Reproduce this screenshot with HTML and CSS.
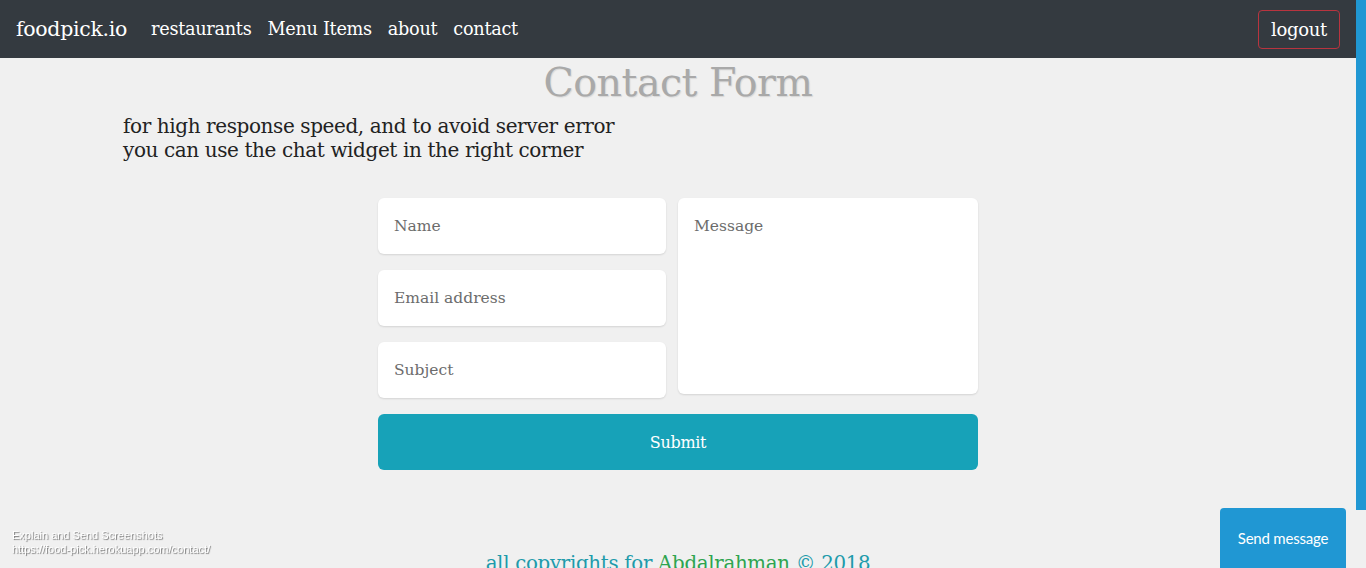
FILE: index.html
```html
<!DOCTYPE html>
<html lang="en">
<head>
<meta charset="utf-8">
<title>foodpick.io - contact</title>
<link rel="stylesheet" href="styles.css">
</head>
<body>
<div class="page">
  <nav class="navbar">
    <a class="brand" href="#">foodpick.io</a>
    <ul class="nav-links">
      <li><a href="#">restaurants</a></li>
      <li><a href="#">Menu Items</a></li>
      <li><a href="#">about</a></li>
      <li><a href="#">contact</a></li>
    </ul>
    <button class="logout">logout</button>
  </nav>
  <main class="content">
    <h1 class="title">Contact Form</h1>
    <p class="note">for high response speed, and to avoid server error<br>you can use the chat widget in the right corner</p>
    <form class="form">
      <div class="col-left">
        <input class="field" type="text" placeholder="Name">
        <input class="field" type="email" placeholder="Email address">
        <input class="field" type="text" placeholder="Subject">
      </div>
      <textarea class="field message" placeholder="Message"></textarea>
      <button class="submit" type="button">Submit</button>
    </form>
    <footer class="footer">all copyrights for <span class="author">Abdalrahman</span> © 2018</footer>
  </main>
</div>
<div class="shot-note">Explain and Send Screenshots<br>https://food-pick.herokuapp.com/contact/</div>
<div class="chat-strip"></div>
<button class="chat-btn">Send message</button>
</body>
</html>
```
FILE: styles.css
```css
* { box-sizing: border-box; }
html, body { margin: 0; padding: 0; height: 100%; overflow: hidden; }
body {
  background: #f0f0f0;
  font-family: "DejaVu Serif", "Liberation Serif", serif;
  color: #222;
}
.page { padding-right: 10px; }
.navbar {
  height: 58px;
  background: #343a40;
  display: flex;
  align-items: center;
  padding: 0 16px;
}
.brand {
  color: #fff;
  text-decoration: none;
  font-size: 20.5px;
  letter-spacing: -0.3px;
  margin-right: 24px;
}
.nav-links {
  list-style: none;
  display: flex;
  gap: 16px;
  margin: 0;
  padding: 0;
  flex: 1;
}
.nav-links a {
  color: #fff;
  text-decoration: none;
  font-size: 17.7px;
  letter-spacing: -0.3px;
}
.logout {
  background: transparent;
  border: 1px solid #b8343f;
  color: #fff;
  border-radius: 4px;
  font-family: inherit;
  font-size: 18px;
  height: 39px;
  padding: 0 12px;
  letter-spacing: -0.3px;
}
.content { display: flex; flex-direction: column; align-items: center; }
.title {
  margin: 2px 0 0;
  font-weight: normal;
  font-size: 39.5px;
  line-height: 44px;
  color: #a9a9a9;
  text-shadow: 1px 1px 1px #d8d8d8;
  letter-spacing: -0.5px;
}
.note {
  align-self: flex-start;
  margin: 10px 0 0 123px;
  font-size: 20px;
  line-height: 24px;
  letter-spacing: -0.4px;
  color: #222;
}
.form {
  margin-top: 36px;
  width: 600px;
  display: grid;
  grid-template-columns: 288px 300px;
  column-gap: 12px;
  row-gap: 16px;
  align-items: start;
}
.col-left { display: flex; flex-direction: column; gap: 16px; }
.field {
  border: none;
  background: #fff;
  border-radius: 6px;
  height: 56px;
  padding: 0 16px;
  font-family: inherit;
  font-size: 15.5px;
  color: #495057;
  box-shadow: 0 1px 2px rgba(0,0,0,0.12);
  outline: none;
}
.field::placeholder { color: #6c6c6c; }
.message {
  height: 196px;
  resize: none;
  padding: 16px 16px;
  line-height: 24px;
}
.submit {
  grid-column: 1 / -1;
  height: 56px;
  border: none;
  border-radius: 6px;
  background: #17a2b8;
  color: #fff;
  font-family: inherit;
  font-size: 16px;
  letter-spacing: -0.3px;
}
.footer {
  margin-top: 82px;
  font-size: 19.8px;
  color: #1e9bab;
  letter-spacing: -0.3px;
}
.author { color: #2ea44f; }
.shot-note {
  position: fixed;
  left: 12px;
  top: 528px;
  font-family: "Liberation Sans", Arial, sans-serif;
  font-size: 11px;
  line-height: 14px;
  color: #fff;
  text-shadow: 1px 1px 1px #777;
}
.chat-strip {
  position: fixed;
  right: 0;
  top: 0;
  width: 10px;
  height: 510px;
  background: #2097d3;
}
.chat-btn {
  position: fixed;
  left: 1220px;
  top: 508px;
  width: 126px;
  height: 70px;
  border: none;
  border-radius: 4px 4px 0 0;
  background: #2097d3;
  color: #fff;
  font-family: Lato, "Open Sans", sans-serif;
  font-size: 15px;
  padding: 0 0 10px;
  letter-spacing: -0.2px;
}
```
